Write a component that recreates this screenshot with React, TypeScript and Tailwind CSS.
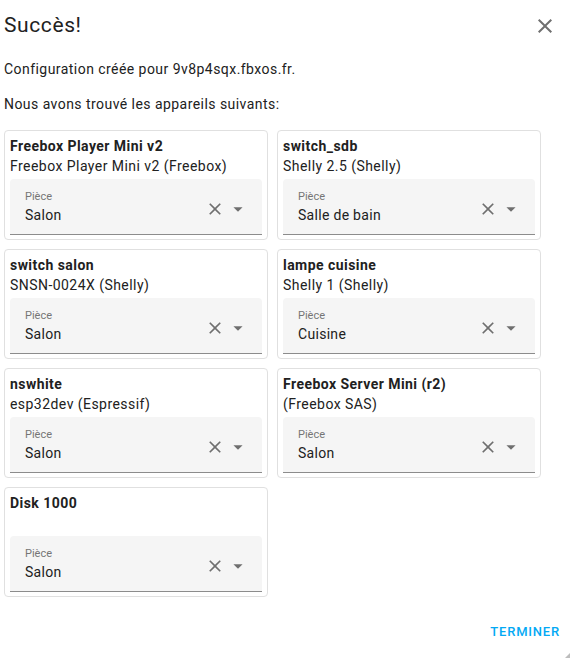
import React from "react";

const devices = [
  { name: "Freebox Player Mini v2", sub: "Freebox Player Mini v2 (Freebox)", room: "Salon" },
  { name: "switch_sdb", sub: "Shelly 2.5 (Shelly)", room: "Salle de bain" },
  { name: "switch salon", sub: "SNSN-0024X (Shelly)", room: "Salon" },
  { name: "lampe cuisine", sub: "Shelly 1 (Shelly)", room: "Cuisine" },
  { name: "nswhite", sub: "esp32dev (Espressif)", room: "Salon" },
  { name: "Freebox Server Mini (r2)", sub: "(Freebox SAS)", room: "Salon" },
  { name: "Disk 1000", sub: "", room: "Salon" },
];

function Card({ name, sub, room }: { name: string; sub: string; room: string }) {
  return (
    <div className="border border-[#e0e0e0] rounded-[4px] px-[5px] pt-[5px] pb-[4px]">
      <div className="text-[14px] leading-[20px] font-bold text-[#212121] tracking-[0.45px]">{name}</div>
      <div className="text-[14px] leading-[20px] text-[#212121] h-[20px] tracking-[0.45px]">{sub}</div>
      <div className="mt-[3px] h-[56px] bg-[#f5f5f5] rounded-t-[4px] border-b border-[#8c8c8c] flex items-center pl-[15px] pr-[13px]">
        <div className="flex-1 flex flex-col pt-[3px]">
          <span className="text-[11px] leading-[13px] text-[#757575]">Pièce</span>
          <span className="text-[14px] leading-[22px] text-[#212121] mt-[1px] tracking-[0.3px]">{room}</span>
        </div>
        <svg width="20" height="20" viewBox="0 0 24 24" className="mt-[4px]">
          <path d="M19 6.41 17.59 5 12 10.59 6.41 5 5 6.41 10.59 12 5 17.59 6.41 19 12 13.41 17.59 19 19 17.59 13.41 12z" fill="#6f6f6f" />
        </svg>
        <svg width="22" height="22" viewBox="0 0 24 24" className="ml-[2px] mt-[4px]">
          <path d="M7 10l5 5 5-5z" fill="#6f6f6f" />
        </svg>
      </div>
    </div>
  );
}

export default function App() {
  return (
    <div className="w-[570px] h-[658px] bg-white relative overflow-hidden" style={{ fontFamily: "Roboto, 'Liberation Sans', sans-serif" }}>
      <div className="flex items-center justify-between pl-[4px] pr-[13px] pt-[10px]">
        <h1 className="text-[21px] leading-[30px] text-[#212121] font-normal tracking-[0.6px]">Succès!</h1>
        <svg width="24" height="24" viewBox="0 0 24 24" className="mt-[2px]">
          <path d="M19 6.41 17.59 5 12 10.59 6.41 5 5 6.41 10.59 12 5 17.59 6.41 19 12 13.41 17.59 19 19 17.59 13.41 12z" fill="#6f6f6f" />
        </svg>
      </div>
      <p className="pl-[4px] mt-[19px] text-[14px] leading-[20px] text-[#212121] tracking-[0.45px]">Configuration créée pour 9v8p4sqx.fbxos.fr.</p>
      <p className="pl-[4px] mt-[15px] text-[14px] leading-[20px] text-[#212121] tracking-[0.45px]">Nous avons trouvé les appareils suivants:</p>
      <div className="grid grid-cols-2 gap-x-[9px] gap-y-[9px] pl-[4px] w-[541px] mt-[16px]">
        {devices.map((d) => (
          <Card key={d.name} {...d} />
        ))}
      </div>
      <div className="flex justify-end pr-[10px] mt-[25px]">
        <button className="text-[13px] leading-[20px] font-medium tracking-[0.8px] text-[#03a9f4] uppercase">Terminer</button>
      </div>
      <div className="absolute right-0 bottom-0 w-[5px] h-[5px] bg-[#bdbdbd]" style={{ clipPath: "polygon(100% 0, 100% 100%, 0 100%)" }} />
    </div>
  );
}
